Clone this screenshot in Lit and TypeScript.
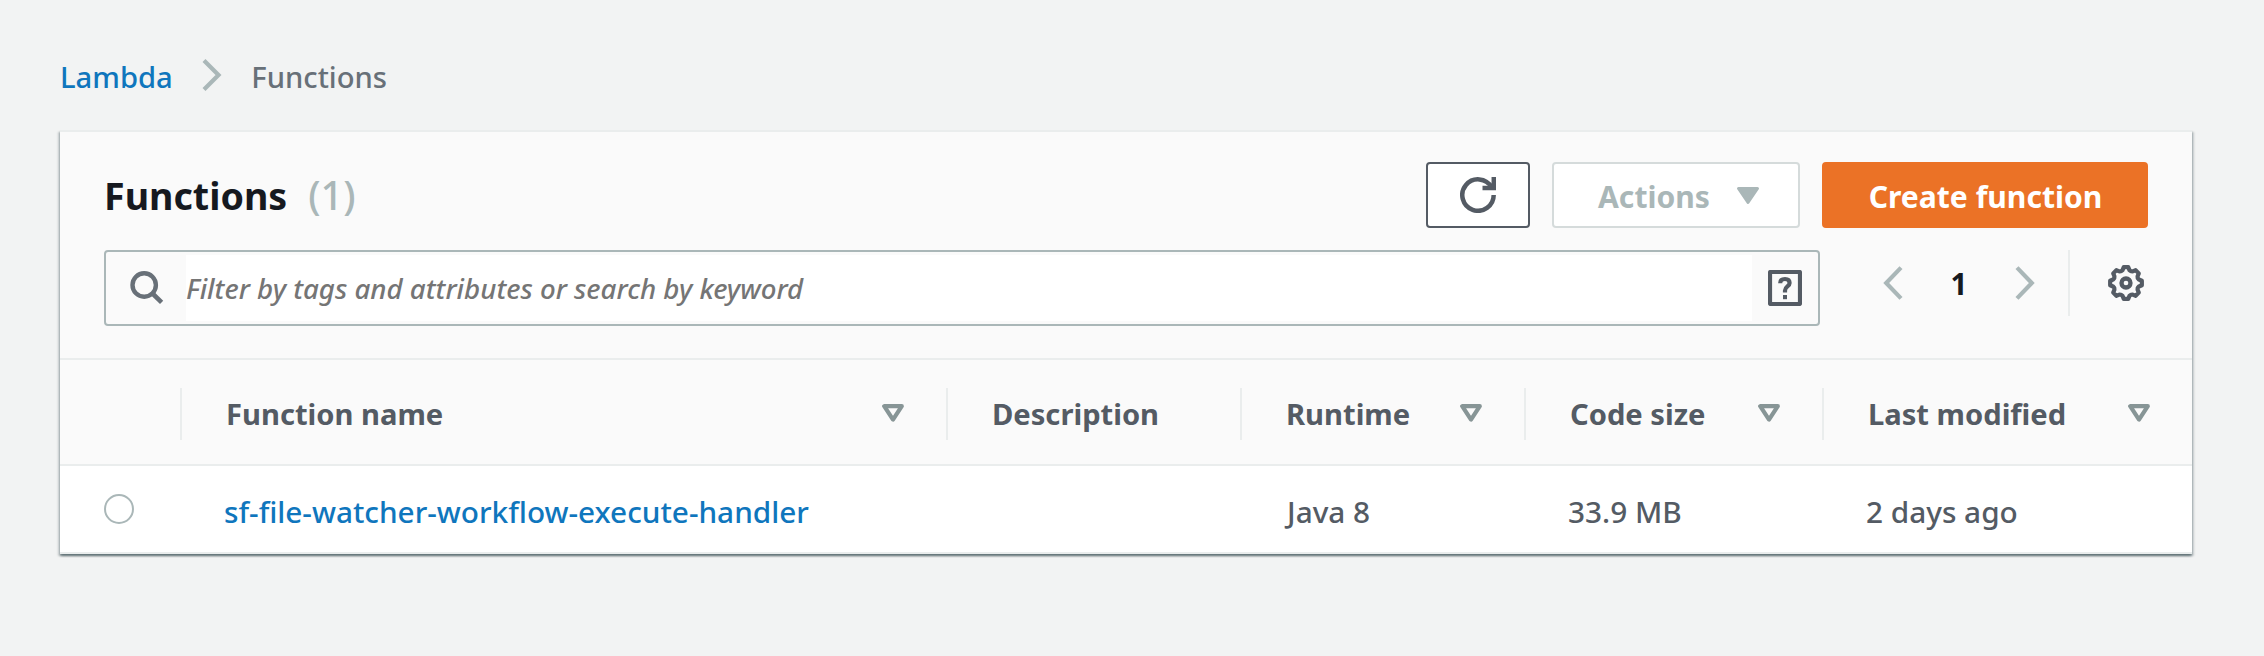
import { LitElement, html, css, svg } from "lit";

interface Column {
  label: string;
  sortable: boolean;
}

interface LambdaFunction {
  name: string;
  description: string;
  runtime: string;
  codeSize: string;
  lastModified: string;
}

const columns: Column[] = [
  { label: "Function name", sortable: true },
  { label: "Description", sortable: false },
  { label: "Runtime", sortable: true },
  { label: "Code size", sortable: true },
  { label: "Last modified", sortable: true },
];

const functions: LambdaFunction[] = [
  {
    name: "sf-file-watcher-workflow-execute-handler",
    description: "",
    runtime: "Java 8",
    codeSize: "33.9 MB",
    lastModified: "2 days ago",
  },
];

// Eight-toothed outline for the settings icon, centred in a 36px box.
const gearPoints = Array.from({ length: 8 }, (_, i) =>
  [
    [-8, 16],
    [8, 16],
    [15, 13.4],
    [22.5, 12.7],
    [30, 13.4],
  ].map(([deg, r]) => {
    const a = ((i * 45 + deg) * Math.PI) / 180;
    return `${(18 + r * Math.sin(a)).toFixed(2)},${(18 - r * Math.cos(a)).toFixed(2)}`;
  })
)
  .flat()
  .join(" ");

const icon = (w: number, h: number, body: unknown) =>
  html`<svg class="icon" width=${w} height=${h} viewBox="0 0 ${w} ${h}" fill="none">${body}</svg>`;

const crumbIcon = icon(20, 34, svg`<path d="M2 2.5 16.5 17 2 31.5" stroke="#aab7b8" stroke-width="4.2"/>`);
const searchIcon = icon(34, 34, svg`<circle cx="14.2" cy="14" r="11.7" stroke="#687078" stroke-width="4.4"/><path d="M22 22 31.6 31.4" stroke="#687078" stroke-width="4.6"/>`);
const refreshIcon = icon(36, 36, svg`<path d="M33.7 18A15.7 15.7 0 1 1 31.6 10.2" stroke="#545b64" stroke-width="4.5"/><path d="M33.8 0V11H22.5" stroke="#545b64" stroke-width="4.5"/>`);
const helpIcon = icon(34, 36, svg`<rect x="2" y="2" width="30" height="32" rx=".6" stroke="#545b64" stroke-width="4.2"/><path d="M12.2 13.3C12.2 10.3 14.2 9 17 9C19.9 9 21.6 10.6 21.6 13C21.6 16.6 17 16.4 17 20.6V22.4" stroke="#545b64" stroke-width="4.2"/><path d="M15 25h4v4.2h-4z" fill="#545b64"/>`);
const prevIcon = icon(20, 34, svg`<path d="M18 1.6 3.2 17 18 32.4" stroke="#aab7b8" stroke-width="4.2"/>`);
const nextIcon = icon(20, 34, svg`<path d="M2 1.6 16.8 17 2 32.4" stroke="#aab7b8" stroke-width="4.2"/>`);
const gearIcon = icon(36, 36, svg`<polygon points=${gearPoints} stroke="#545b64" stroke-width="4.2" stroke-linejoin="round"/><circle cx="18" cy="18" r="4.5" stroke="#545b64" stroke-width="4.3"/>`);
const caretIcon = icon(24, 20, svg`<path d="M2.5 2.5H21.5L12 16.5Z" fill="#aab7b8" stroke="#aab7b8" stroke-width="3" stroke-linejoin="round"/>`);
const sortIcon = icon(22, 18, svg`<path d="M2.2 2.2H19.8L11 15.6Z" stroke="#879596" stroke-width="4.2" stroke-linejoin="round"/>`);

class AppRoot extends LitElement {
  static styles = css`
    :host {
      display: block;
      box-sizing: border-box;
      min-height: 656px;
      padding: 56px 72px 0 60px;
      background: #f2f3f3;
      color: #545b64;
      font-family: "Noto Sans", "Open Sans", sans-serif;
      font-size: 29.6px;
      font-weight: 500;
    }
    *,
    *::before {
      box-sizing: border-box;
    }
    .icon {
      display: block;
      flex: none;
    }
    a {
      color: #0f76bd;
      text-decoration: none;
    }
    .crumbs {
      display: flex;
      align-items: center;
      height: 40px;
      margin-bottom: 34px;
      padding-top: 2px;
      line-height: 40px;
      font-size: 29.2px;
      color: #687078;
    }
    .crumbs .icon {
      margin: -4px 29px 0 29.5px;
    }
    .card {
      border-top: 2px solid #eaeded;
      background: #fff;
      box-shadow:
        0 2px 2px 0 rgba(0, 28, 36, 0.42),
        2px 2px 2px 0 rgba(0, 28, 36, 0.17),
        -2px 2px 2px 0 rgba(0, 28, 36, 0.17);
    }
    .head {
      height: 228px;
      padding: 30px 44px 0;
      border-bottom: 2px solid #eaeded;
      background: #fafafa;
    }
    .titlebar {
      display: flex;
      gap: 22px;
      height: 66px;
      margin-bottom: 22px;
    }
    .title {
      flex: 1;
      display: flex;
      align-items: baseline;
      gap: 21px;
      margin: 0;
      line-height: 66px;
      font-size: 37.6px;
      font-weight: 700;
      color: #16191f;
    }
    .count {
      font-size: 39.5px;
      font-weight: 500;
      color: #aab7b8;
    }
    .btn {
      display: flex;
      align-items: center;
      justify-content: center;
      height: 66px;
      padding: 3px 0 0;
      border: 2px solid #545b64;
      border-radius: 4px;
      background: #fff;
      font: 700 30.1px/60px "Noto Sans", "Open Sans", sans-serif;
      color: #545b64;
    }
    .btn.refresh {
      width: 104px;
      padding: 0 0 1px;
    }
    .btn.actions {
      width: 248px;
      gap: 26px;
      padding-left: 6px;
      border-color: #d5dbdb;
      color: #aab7b8;
    }
    .actions .icon {
      margin-top: -2px;
    }
    .btn.create {
      width: 326px;
      padding-left: 1px;
      border-color: #eb7226;
      background: #eb7226;
      color: #fff;
    }
    .tools {
      display: flex;
      align-items: flex-start;
    }
    .filter {
      display: flex;
      align-items: center;
      width: 1716px;
      height: 76px;
      border: 2px solid #aab7b8;
      border-radius: 4px;
    }
    .filter-icon {
      width: 80px;
      padding-left: 24px;
    }
    .placeholder {
      flex: 1;
      height: 66px;
      background: #fff;
      font-size: 27.65px;
      font-style: italic;
      line-height: 67px;
      color: #757575;
    }
    .help {
      width: 66px;
      padding-left: 16px;
    }
    .pager {
      flex: 1;
      display: flex;
      align-items: center;
      height: 66px;
      padding: 0 4px 0 63px;
    }
    .page {
      width: 112px;
      padding-top: 2px;
      line-height: 60px;
      text-align: center;
      font-weight: 700;
      color: #16191f;
    }
    .rule {
      width: 2px;
      height: 66px;
      margin: 0 38px 0 33px;
      background: #eaeded;
    }
    .row {
      display: grid;
      grid-template-columns: 122px 766px 294px 284px 298px 1fr;
      align-items: center;
      border-bottom: 2px solid #eaeded;
    }
    .row.header {
      height: 106px;
      background: #fafafa;
      font-size: 29.15px;
      font-weight: 700;
    }
    .row.item {
      height: 88px;
      font-size: 29.75px;
    }
    .th {
      display: flex;
      align-items: center;
      justify-content: space-between;
      height: 52px;
      margin-top: 4px;
      padding: 0 42px 0 44px;
      border-right: 2px solid #eaeded;
      line-height: 52px;
    }
    .th .icon {
      margin-top: -3px;
    }
    .th:last-child {
      border-right: 0;
    }
    .td {
      padding: 6px 0 0 42px;
      line-height: 52px;
      white-space: nowrap;
    }
    .td.runtime {
      padding-left: 45px;
    }
    .radio {
      width: 30px;
      height: 30px;
      margin-left: 44px;
      border: 2px solid #aab7b8;
      border-radius: 50%;
      background: #fff;
    }
  `;

  render() {
    return html`
      <nav class="crumbs"><a>Lambda</a>${crumbIcon}<span>Functions</span></nav>
      <section class="card">
        <header class="head">
          <div class="titlebar">
            <h1 class="title">Functions <span class="count">(${functions.length})</span></h1>
            <button class="btn refresh" aria-label="Refresh">${refreshIcon}</button>
            <button class="btn actions">Actions ${caretIcon}</button>
            <button class="btn create">Create function</button>
          </div>
          <div class="tools">
            <div class="filter">
              <div class="filter-icon">${searchIcon}</div>
              <div class="placeholder">Filter by tags and attributes or search by keyword</div>
              <div class="help">${helpIcon}</div>
            </div>
            <div class="pager">
              ${prevIcon}
              <span class="page">1</span>
              ${nextIcon}
              <span class="rule"></span>
              ${gearIcon}
            </div>
          </div>
        </header>
        <div class="row header">
          <div class="th"></div>
          ${columns.map((c) => html`<div class="th">${c.label}${c.sortable ? sortIcon : ""}</div>`)}
        </div>
        ${functions.map(
          (f) => html`<div class="row item">
            <div class="radio"></div>
            <div class="td"><a>${f.name}</a></div>
            <div class="td">${f.description}</div>
            <div class="td runtime">${f.runtime}</div>
            <div class="td">${f.codeSize}</div>
            <div class="td">${f.lastModified}</div>
          </div>`
        )}
      </section>
    `;
  }
}

customElements.define("app-root", AppRoot);
